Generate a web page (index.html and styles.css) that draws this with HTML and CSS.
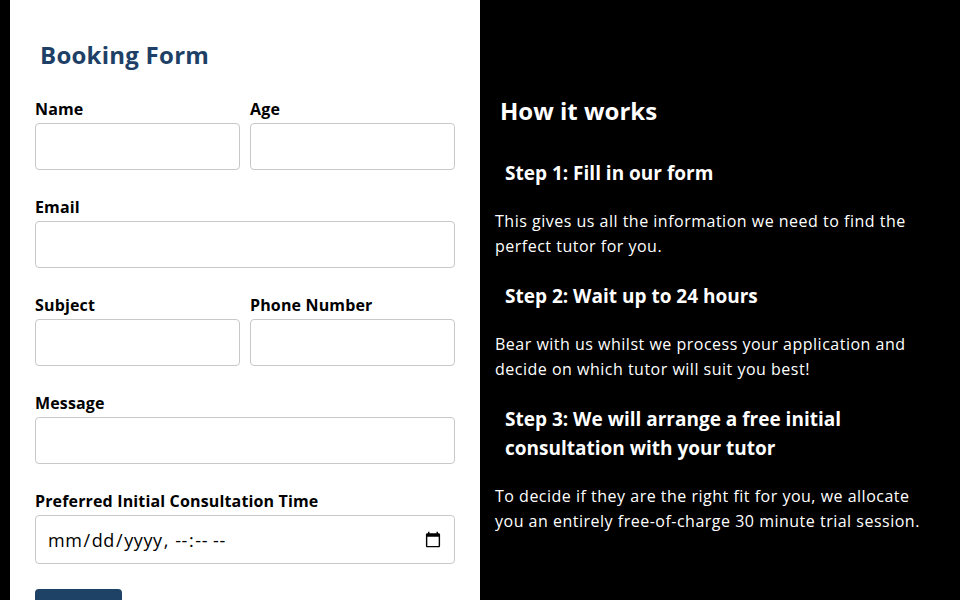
FILE: index.html
```html
<!DOCTYPE html>
<html lang="en">
<head>
<meta charset="utf-8">
<title>Booking Form</title>
<link rel="stylesheet" href="styles.css">
</head>
<body>
<div class="page">
  <section class="form-panel">
    <h1 class="form-title">Booking Form</h1>
    <form class="form">
      <div class="row">
        <div class="field">
          <label class="label" for="name">Name</label>
          <input class="input" id="name" type="text">
        </div>
        <div class="field">
          <label class="label" for="age">Age</label>
          <input class="input" id="age" type="text">
        </div>
      </div>
      <div class="row">
        <div class="field">
          <label class="label" for="email">Email</label>
          <input class="input" id="email" type="email">
        </div>
      </div>
      <div class="row">
        <div class="field">
          <label class="label" for="subject">Subject</label>
          <input class="input" id="subject" type="text">
        </div>
        <div class="field">
          <label class="label" for="phone">Phone Number</label>
          <input class="input" id="phone" type="tel">
        </div>
      </div>
      <div class="row">
        <div class="field">
          <label class="label" for="message">Message</label>
          <input class="input" id="message" type="text">
        </div>
      </div>
      <div class="row">
        <div class="field">
          <label class="label" for="time">Preferred Initial Consultation Time</label>
          <input class="input input-date" id="time" type="datetime-local">
        </div>
      </div>
      <button class="submit" type="submit">Submit</button>
    </form>
  </section>
  <section class="info-panel">
    <h2 class="info-title">How it works</h2>
    <h3 class="step-title">Step 1: Fill in our form</h3>
    <p class="step-text">This gives us all the information we need to find the perfect tutor for you.</p>
    <h3 class="step-title">Step 2: Wait up to 24 hours</h3>
    <p class="step-text">Bear with us whilst we process your application and decide on which tutor will suit you best!</p>
    <h3 class="step-title">Step 3: We will arrange a free initial consultation with your tutor</h3>
    <p class="step-text">To decide if they are the right fit for you, we allocate you an entirely free-of-charge 30 minute trial session.</p>
  </section>
</div>
</body>
</html>
```

FILE: styles.css
```css
* { box-sizing: border-box; }

html, body {
  margin: 0;
  padding: 0;
  background: #000;
  height: 100%;
  overflow: hidden;
}

body {
  font-family: "Open Sans", "Noto Sans", sans-serif;
}

.page {
  display: flex;
  padding-left: 10px;
  height: 100%;
}

.form-panel {
  width: 470px;
  flex: none;
  background: #fff;
  padding: 40px 25px 0 25px;
}

.form-title {
  margin: 0 0 28px 5px;
  font-size: 24px;
  line-height: 30px;
  font-weight: 700;
  letter-spacing: 0.25px;
  color: #1e3f66;
}

.form {
  display: flex;
  flex-direction: column;
}

.row {
  display: flex;
  gap: 10px;
  margin-bottom: 26px;
}

.field {
  flex: 1 1 0;
  min-width: 0;
  display: flex;
  flex-direction: column;
}

.label {
  font-size: 16px;
  line-height: 22px;
  font-weight: 700;
  letter-spacing: 0.15px;
  color: #000;
  margin-bottom: 3px;
}

.input {
  width: 100%;
  min-width: 0;
  height: 47px;
  border: 1px solid #c8c8c8;
  border-radius: 4px;
  background: #fff;
  font-family: inherit;
  font-size: 16px;
  padding: 0 10px;
}

.input-date {
  height: 49px;
  font-size: 18px;
  letter-spacing: 0.6px;
  color: #000;
  padding: 0 10px 0 11px;
}

.submit {
  align-self: flex-start;
  width: 87px;
  height: 40px;
  margin-top: -1px;
  border: none;
  border-radius: 4px;
  background: #1e4266;
  color: #fff;
  font-family: inherit;
  font-size: 15px;
  font-weight: 600;
}

.info-panel {
  flex: 1;
  color: #fff;
  padding: 93px 30px 0 15px;
}

.info-title {
  margin: 0 0 30px 5px;
  font-size: 24px;
  line-height: 36px;
  font-weight: 700;
}

.step-title {
  margin: 0 0 21px 10px;
  font-size: 19px;
  line-height: 29px;
  font-weight: 700;
}

.step-text {
  margin: 0 0 23px 0;
  font-size: 16px;
  line-height: 25px;
  font-weight: 400;
  letter-spacing: 0.5px;
}
```
